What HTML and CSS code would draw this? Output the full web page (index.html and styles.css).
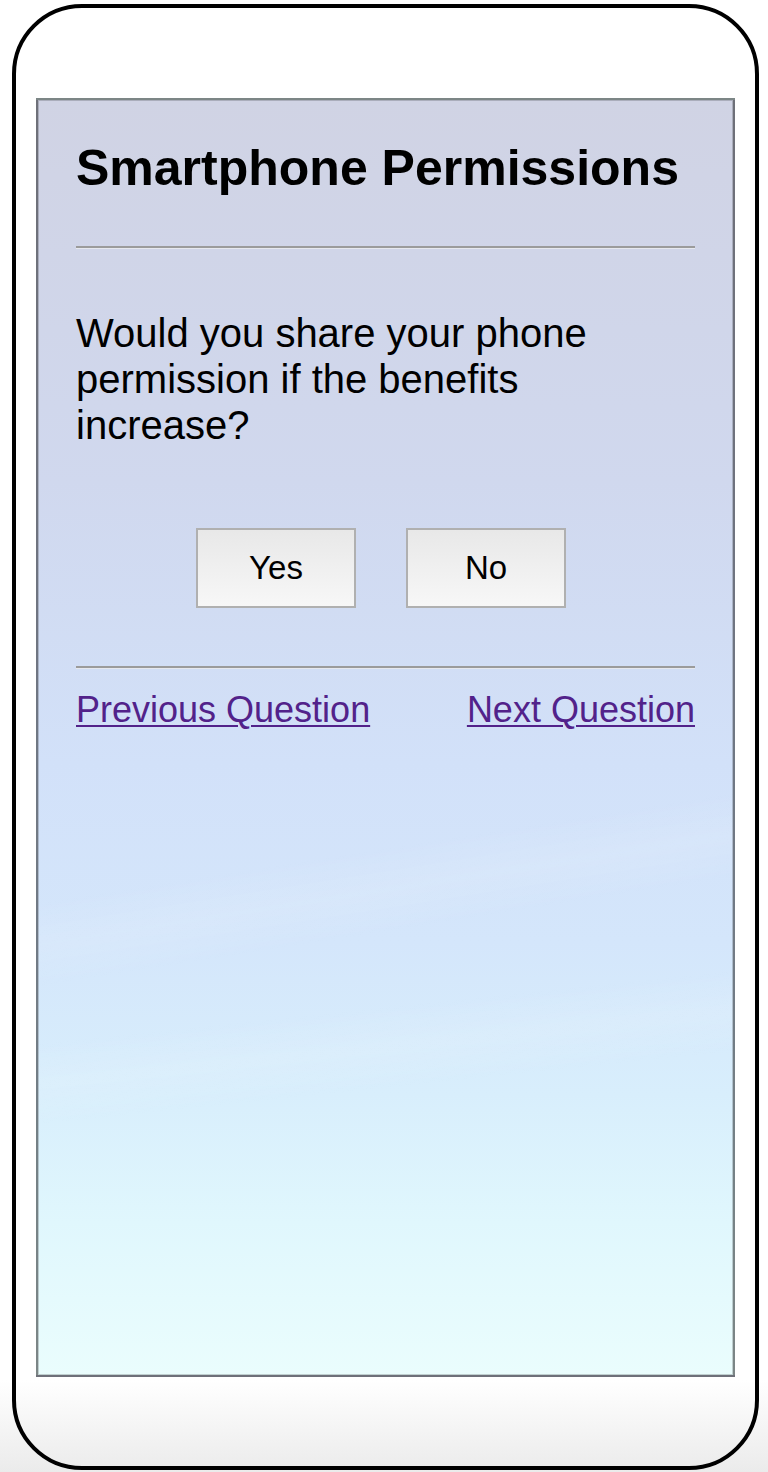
FILE: index.html
```html
<!DOCTYPE html>
<html lang="en">
<head>
<meta charset="utf-8">
<title>Smartphone Permissions</title>
<link rel="stylesheet" href="styles.css">
</head>
<body>
<div class="phone">
  <main class="screen">
    <h1 class="title">Smartphone Permissions</h1>
    <hr class="rule rule-top">
    <p class="question">Would you share your phone permission if the benefits increase?</p>
    <div class="answers">
      <button class="answer" type="button">Yes</button>
      <button class="answer" type="button">No</button>
    </div>
    <hr class="rule rule-bottom">
    <nav class="nav">
      <a class="nav-link" href="#prev">Previous Question</a>
      <a class="nav-link" href="#next">Next Question</a>
    </nav>
  </main>
</div>
</body>
</html>
```

FILE: styles.css
```css
html {
  background: linear-gradient(to bottom, #ffffff 0, #ffffff 1380px, #ebebeb 1472px);
  min-height: 1472px;
}

body {
  margin: 0;
  padding: 4px 0 0 12px;
  font-family: "Liberation Sans", Arial, Helvetica, sans-serif;
  color: #000;
}

.phone {
  box-sizing: border-box;
  width: 747px;
  height: 1466px;
  border: 4px solid #000;
  border-radius: 70px;
  padding: 90px 20px 0 20px;
}

.screen {
  box-sizing: border-box;
  width: 699px;
  height: 1279px;
  border: 2px solid rgba(0, 0, 0, 0.47);
  box-shadow: inset 0 0 0 1px rgba(0, 0, 0, 0.18);
  padding: 40px 38px 0 38px;
  background:
    linear-gradient(171deg, rgba(255,255,255,0) 58%, rgba(255,255,255,0.10) 61%, rgba(255,255,255,0) 64%),
    linear-gradient(174deg, rgba(255,255,255,0) 70%, rgba(255,255,255,0.10) 73%, rgba(255,255,255,0) 76%),
    linear-gradient(to bottom,
      #d0d3e4 0%,
      #d0d8ee 30%,
      #d2e1f9 52%,
      #d4e6fb 66%,
      #d8eefc 78%,
      #e0f7fd 88%,
      #eafdfd 100%);
}

.title {
  margin: 0;
  font-size: 50px;
  line-height: 57px;
  font-weight: bold;
}

.rule {
  margin: 0;
  height: 0;
  border: 0;
  border-top: 2px solid #9b9b9b;
  border-bottom: 1px solid #e6e8ee;
}

.rule-top {
  margin-top: 49px;
}

.question {
  margin: 61px 0 0 0;
  font-size: 40px;
  line-height: 46px;
}

.answers {
  display: flex;
  justify-content: center;
  gap: 50px;
  margin-top: 80px;
  padding-right: 9px;
}

.answer {
  box-sizing: border-box;
  width: 160px;
  height: 80px;
  border: 2px solid #b0b0b0;
  border-radius: 0;
  background: linear-gradient(to bottom, #e8e8e8, #f7f7f7);
  font-family: "Liberation Sans", Arial, Helvetica, sans-serif;
  font-size: 33px;
  color: #000;
  padding: 0;
}

.rule-bottom {
  margin-top: 58px;
}

.nav {
  display: flex;
  justify-content: space-between;
  margin-top: 20px;
  font-size: 36px;
  line-height: 41px;
}

.nav-link {
  color: #52228a;
  text-decoration: underline;
  text-decoration-thickness: 2px;
  text-underline-offset: 3px;
}
```
